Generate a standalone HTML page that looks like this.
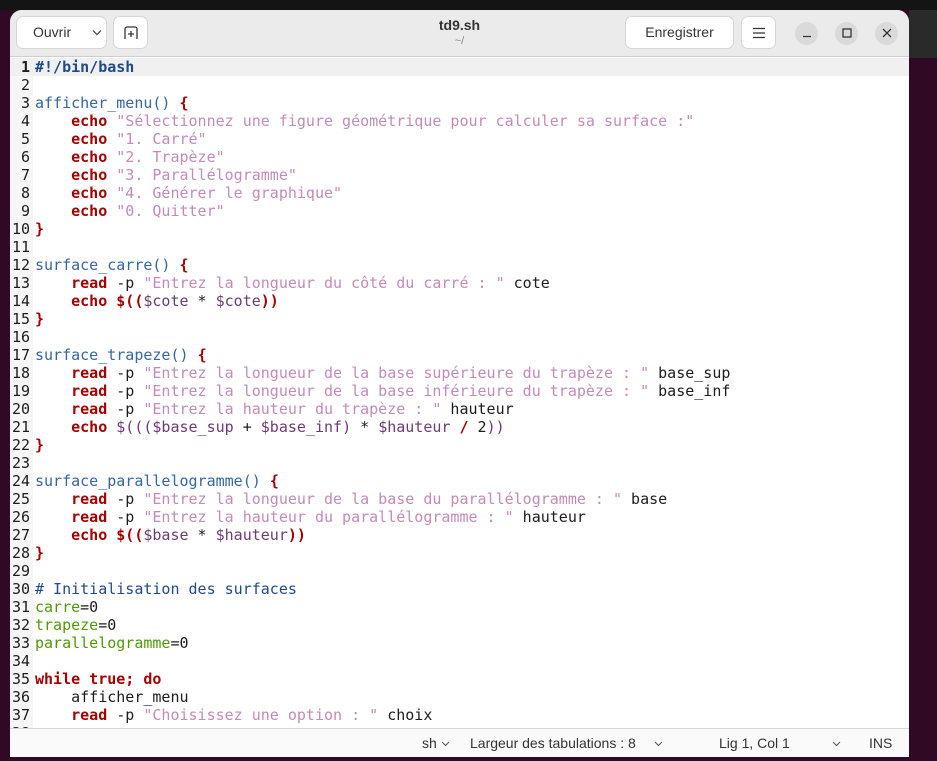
<!DOCTYPE html>
<html><head><meta charset="utf-8"><style>
*{margin:0;padding:0;box-sizing:border-box}
body{width:937px;height:761px;overflow:hidden;background:#300a24;position:relative;font-family:"Liberation Sans","DejaVu Sans",sans-serif}
.top{position:absolute;left:0;top:0;width:937px;height:10px;background:#141414}
.rdark{position:absolute;left:909px;top:10px;width:28px;height:48px;background:#2a2a2a}
.win{position:absolute;left:10px;top:10px;width:899px;height:747px;background:#fff;border-radius:12px 12px 0 0;overflow:hidden}
.hdr{position:absolute;left:0;top:0;width:899px;height:47px;background:#ebebeb;border-bottom:1px solid #cfcfcf}
.btn{position:absolute;top:6px;height:33px;background:#fff;border:1px solid #d6d6d6;border-radius:7px;font-size:14px;color:#333;line-height:31px;text-align:center}
.circ{position:absolute;top:12px;width:23px;height:23px;border-radius:50%;background:#dadada;text-align:center;line-height:23px;color:#333;font-size:14px}
.title{position:absolute;left:0;width:899px;text-align:center;top:7px;font-size:14px;font-weight:bold;color:#333}
.sub{position:absolute;left:0;width:899px;text-align:center;top:25px;font-size:11px;color:#888}
.gut{position:absolute;left:0;top:48px;width:23px;height:672px;background:#f6f6f6}
.hl{position:absolute;left:0;top:48px;width:899px;height:18px;background:#f0f0f0}
pre{position:absolute;top:48px;font-family:"DejaVu Sans Mono","Liberation Mono",monospace;font-size:15px;line-height:18px;color:#1c1c1c}
.ln{left:0;width:20px;text-align:right;color:#1c1c1c}
.code{left:25px}
.k{color:#a40000;font-weight:bold}
.s{color:#c38bb8}
.f{color:#3465a4}
.v{color:#6c3b73}
.c{color:#204a87}
.g{color:#4e9a06}
.sb{position:absolute;left:0;top:718px;width:899px;height:29px;background:#fafafa;border-top:1px solid #d8d8d8;font-size:14px;color:#333}
.sb span{position:absolute;top:6px}
.chev{position:absolute}
</style></head><body>
<div class="top"></div><div class="rdark"></div>
<div class="win">
<div class="hdr">
<div class="btn" style="left:6px;width:91px;text-align:left;padding-left:16px">Ouvrir <svg class="chev" style="left:75px;top:12px" width="10" height="7" viewBox="0 0 10 7"><path d="M1 1.5l4 4 4-4" fill="none" stroke="#444" stroke-width="1.2"/></svg></div>
<div class="btn" style="left:103px;width:35px"><svg width="16" height="16" viewBox="0 0 16 16" style="margin-top:8px"><path d="M2 14V4a2 2 0 0 1 2-2h8a2 2 0 0 1 2 2v10M8 6v6M5 9h6" fill="none" stroke="#333" stroke-width="1.3"/></svg></div>
<div class="title">td9.sh</div><div class="sub">~/</div>
<div class="btn" style="left:615px;width:109px">Enregistrer</div>
<div class="btn" style="left:731px;width:35px"><svg width="14" height="12" viewBox="0 0 14 12" style="margin-top:10px"><path d="M1 1.5h12M1 6h12M1 10.5h12" stroke="#333" stroke-width="1.3"/></svg></div>
<div class="circ" style="left:785px"><svg width="10" height="10" viewBox="0 0 10 10"><path d="M1 8.5h8" stroke="#333" stroke-width="1.3"/></svg></div>
<div class="circ" style="left:825px"><svg width="10" height="10" viewBox="0 0 10 10"><rect x="1" y="1" width="8" height="8" fill="none" stroke="#333" stroke-width="1.3"/></svg></div>
<div class="circ" style="left:865px"><svg width="10" height="10" viewBox="0 0 10 10"><path d="M1 1l8 8M9 1l-8 8" stroke="#333" stroke-width="1.3"/></svg></div>
</div>
<div class="gut"></div><div class="hl"></div>
<pre class="ln"><b>1</b>
2
3
4
5
6
7
8
9
10
11
12
13
14
15
16
17
18
19
20
21
22
23
24
25
26
27
28
29
30
31
32
33
34
35
36
37
38</pre>
<pre class="code"><span class="c" style="font-weight:bold">#!/bin/bash</span>

<span class="f">afficher_menu()</span> <span class="k">{</span>
    <span class="k">echo</span> <span class="s">"Sélectionnez une figure géométrique pour calculer sa surface :"</span>
    <span class="k">echo</span> <span class="s">"1. Carré"</span>
    <span class="k">echo</span> <span class="s">"2. Trapèze"</span>
    <span class="k">echo</span> <span class="s">"3. Parallélogramme"</span>
    <span class="k">echo</span> <span class="s">"4. Générer le graphique"</span>
    <span class="k">echo</span> <span class="s">"0. Quitter"</span>
<span class="k">}</span>

<span class="f">surface_carre()</span> <span class="k">{</span>
    <span class="k">read</span> -p <span class="s">"Entrez la longueur du côté du carré : "</span> cote
    <span class="k">echo</span> <span class="k">$((</span><span class="v">$cote</span> * <span class="v">$cote</span><span class="k">))</span>
<span class="k">}</span>

<span class="f">surface_trapeze()</span> <span class="k">{</span>
    <span class="k">read</span> -p <span class="s">"Entrez la longueur de la base supérieure du trapèze : "</span> base_sup
    <span class="k">read</span> -p <span class="s">"Entrez la longueur de la base inférieure du trapèze : "</span> base_inf
    <span class="k">read</span> -p <span class="s">"Entrez la hauteur du trapèze : "</span> hauteur
    <span class="k">echo</span> <span class="v">$(((</span><span class="v">$base_sup</span> + <span class="v">$base_inf</span><span class="v">)</span> * <span class="v">$hauteur</span> <span class="k">/</span> 2<span class="v">))</span>
<span class="k">}</span>

<span class="f">surface_parallelogramme()</span> <span class="k">{</span>
    <span class="k">read</span> -p <span class="s">"Entrez la longueur de la base du parallélogramme : "</span> base
    <span class="k">read</span> -p <span class="s">"Entrez la hauteur du parallélogramme : "</span> hauteur
    <span class="k">echo</span> <span class="k">$((</span><span class="v">$base</span> * <span class="v">$hauteur</span><span class="k">))</span>
<span class="k">}</span>

<span class="c"># Initialisation des surfaces</span>
<span class="g">carre</span>=0
<span class="g">trapeze</span>=0
<span class="g">parallelogramme</span>=0

<span class="k">while true; do</span>
    afficher_menu
    <span class="k">read</span> -p <span class="s">"Choisissez une option : "</span> choix
</pre>
<div class="sb">
<span style="left:412px">sh</span>
<svg class="chev" style="left:431px;top:12px" width="9" height="6" viewBox="0 0 9 6"><path d="M1 1l3.5 3.5L8 1" fill="none" stroke="#555" stroke-width="1"/></svg>
<span style="left:460px">Largeur des tabulations : 8</span>
<svg class="chev" style="left:644px;top:12px" width="9" height="6" viewBox="0 0 9 6"><path d="M1 1l3.5 3.5L8 1" fill="none" stroke="#555" stroke-width="1"/></svg>
<span style="left:709px">Lig 1, Col 1</span>
<svg class="chev" style="left:822px;top:12px" width="9" height="6" viewBox="0 0 9 6"><path d="M1 1l3.5 3.5L8 1" fill="none" stroke="#555" stroke-width="1"/></svg>
<span style="left:859px">INS</span>
</div>
</div>
</body></html>
